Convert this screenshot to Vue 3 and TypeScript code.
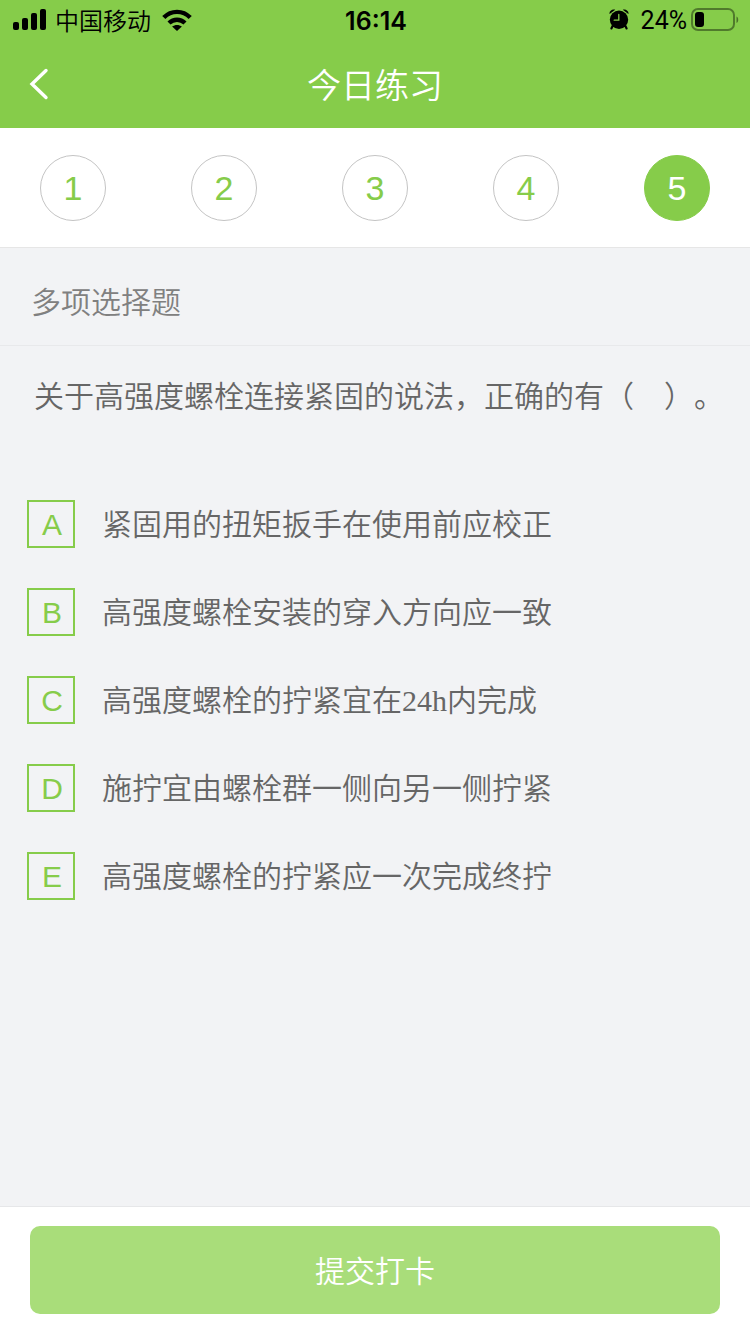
<script setup lang="ts">
import { ref } from 'vue'

interface Option {
  key: string
  text: string
}

const steps: number[] = [1, 2, 3, 4, 5]
const current = ref<number>(5)
const picked = ref<string[]>([])

const options: Option[] = [
  { key: 'A', text: '紧固用的扭矩扳手在使用前应校正' },
  { key: 'B', text: '高强度螺栓安装的穿入方向应一致' },
  { key: 'C', text: '高强度螺栓的拧紧宜在24h内完成' },
  { key: 'D', text: '施拧宜由螺栓群一侧向另一侧拧紧' },
  { key: 'E', text: '高强度螺栓的拧紧应一次完成终拧' },
]
</script>

<template>
  <div class="page">
    <header class="top">
      <div class="status">
        <div class="status-left">
          <svg class="signal" viewBox="0 0 34 22" width="34" height="22" aria-hidden="true">
            <rect x="0" y="13" width="6" height="8" rx="2" />
            <rect x="9" y="9" width="6" height="12" rx="2" />
            <rect x="18" y="4" width="6" height="17" rx="2" />
            <rect x="27" y="0" width="6" height="21" rx="2" />
          </svg>
          <span class="carrier">中国移动</span>
          <svg class="wifi" viewBox="0 0 30 22" width="30" height="22" aria-hidden="true">
            <g fill="none" stroke="#000" stroke-width="4.4">
              <path d="M1.8 8.6C9.2 .9 20.8 .9 28.2 8.6" />
              <path d="M7 14C11.6 9.6 18.4 9.6 23 14" />
            </g>
            <path d="M15 22L10.1 17.6C12.9 15.3 17.1 15.3 19.9 17.6Z" />
          </svg>
        </div>
        <time class="clock">16:14</time>
        <div class="status-right">
          <svg viewBox="0 0 20 22" width="20" height="22" aria-hidden="true">
            <circle cx="10" cy="10.8" r="9.2" />
            <path d="M.6 5C-.2 2.2 3.4-.6 6.2 .8ZM19.4 5C20.2 2.2 16.6-.6 13.8 .8Z" />
            <path d="M3.6 17L2.4 19.4M16.4 17L17.6 19.4" stroke="#000" stroke-width="2.2" stroke-linecap="round" />
            <path d="M9.8 5.4V11.2H5.2" fill="none" stroke="#86cc4a" stroke-width="1.3" stroke-linecap="round" />
          </svg>
          <span class="percent">24%</span>
          <svg class="battery" viewBox="0 0 48 24" width="48" height="24" aria-hidden="true">
            <rect x="1" y="1" width="42" height="21" rx="6" fill="none" stroke="#000" stroke-opacity=".4" stroke-width="2" />
            <rect x="4" y="4" width="9" height="15" rx="3" />
            <path d="M45.5 8.5C47.8 9.5 47.8 14 45.5 15Z" fill-opacity=".45" />
          </svg>
        </div>
      </div>
      <div class="nav">
        <button class="back" type="button" aria-label="返回">
          <svg viewBox="0 0 20 32" width="20" height="32" aria-hidden="true">
            <path d="M17 2.5L3 16L17 29.5" fill="none" stroke="#fff" stroke-width="3.4" stroke-linecap="round" />
          </svg>
        </button>
        <h1>今日练习</h1>
      </div>
    </header>

    <nav class="steps">
      <button
        v-for="n in steps"
        :key="n"
        type="button"
        class="step"
        :class="{ active: n === current }"
        @click="current = n"
      >{{ n }}</button>
    </nav>

    <main>
      <h2>多项选择题</h2>
      <p id="question" class="question">关于高强度螺栓连接紧固的说法，正确的有（　）。</p>
      <div class="options" role="group" aria-labelledby="question">
        <label v-for="o in options" :key="o.key" class="option">
          <span class="box">
            <input v-model="picked" type="checkbox" :value="o.key" />
            <span class="letter">{{ o.key }}</span>
          </span>
          <span class="text">{{ o.text }}</span>
        </label>
      </div>
    </main>

    <footer>
      <button class="submit" type="button">提交打卡</button>
    </footer>
  </div>
</template>

<style>
body {
  margin: 0;
}
</style>

<style scoped>
.page {
  display: flex;
  flex-direction: column;
  min-height: 100vh;
  background: #f2f3f5;
  color: #666;
  font-family: "Noto Sans CJK SC", sans-serif;
  font-size: 30px;
  font-weight: 350;
  line-height: 40px;
}

button {
  padding: 0;
  border: 0;
  font: inherit;
  cursor: pointer;
}

.top {
  background: #86cc4a;
}

.status {
  display: grid;
  grid-template-columns: 1fr auto 1fr;
  align-items: center;
  height: 40px;
  padding: 0 11px 0 13px;
  color: #000;
  font-size: 24px;
  line-height: 36px;
}

.status-left,
.status-right {
  display: flex;
  align-items: center;
}

.status-right {
  justify-content: flex-end;
}

.carrier {
  margin: 0 11px 0 8px;
}

.clock {
  padding-top: 2px;
  font-family: Inter, sans-serif;
  font-size: 25px;
  font-weight: 600;
}

.percent {
  margin: 0 4px 0 12px;
  padding-top: 2px;
  font-family: Roboto, sans-serif;
  font-size: 25px;
  font-weight: 400;
}

.nav {
  display: grid;
  grid-template-columns: 88px 1fr 88px;
  align-items: center;
  height: 88px;
}

.back {
  display: flex;
  align-items: center;
  height: 88px;
  padding-left: 29px;
  background: none;
}

h1 {
  margin: 0;
  color: #fff;
  font-size: 34px;
  font-weight: 350;
  text-align: center;
}

.steps {
  display: flex;
  justify-content: space-between;
  padding: 27px 40px 26px;
  border-bottom: 1px solid #e6e6e6;
  background: #fff;
}

.step {
  width: 66px;
  height: 66px;
  border: 1px solid #c4c4c4;
  border-radius: 50%;
  background: #fff;
  color: #86cc4a;
  font-family: "Liberation Sans", sans-serif;
  font-size: 34px;
  font-weight: 400;
}

.step.active {
  border-color: #86cc4a;
  background: #86cc4a;
  color: #fff;
}

main {
  flex: 1;
}

h2 {
  margin: 0;
  padding: 32px 31px 25px;
  border-bottom: 1px solid #e8e9eb;
  color: #808080;
  font-size: 30px;
  font-weight: 350;
}

.question {
  margin: 0;
  padding: 28px 24px 86px 34px;
  text-spacing-trim: space-all;
}

.options {
  display: flex;
  flex-direction: column;
  gap: 40px;
  padding: 0 27px 40px;
}

.option {
  display: flex;
  align-items: center;
  gap: 27px;
  cursor: pointer;
}

.box {
  display: grid;
  flex: none;
  place-items: center;
  width: 48px;
  height: 48px;
}

.box > * {
  grid-area: 1 / 1;
}

.box input {
  width: 48px;
  height: 48px;
  margin: 0;
  border: 2px solid #86cc4a;
  appearance: none;
  cursor: pointer;
}

.box input:checked {
  background: #86cc4a;
}

.letter {
  z-index: 1;
  padding: 2px 0 0 2px;
  color: #86cc4a;
  font-family: "Liberation Sans", sans-serif;
  font-weight: 400;
  pointer-events: none;
}

.box input:checked + .letter {
  color: #fff;
}

.text {
  padding-top: 2px;
  font-family: "Liberation Serif", "Noto Sans CJK SC", serif;
}

footer {
  padding: 19px 30px 20px;
  border-top: 1px solid #e6e7e9;
  background: #fff;
}

.submit {
  display: block;
  width: 100%;
  height: 88px;
  padding-bottom: 2px;
  border-radius: 10px;
  background: #a9dd7a;
  color: #fff;
}
</style>
